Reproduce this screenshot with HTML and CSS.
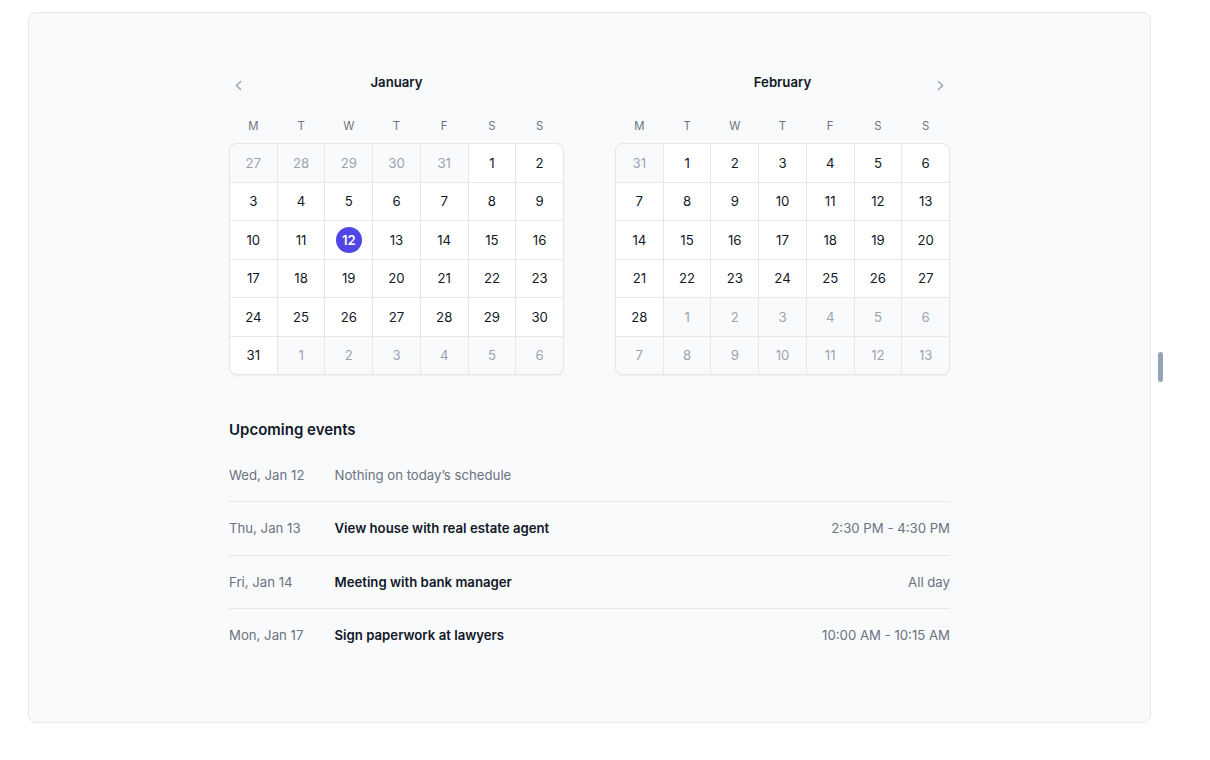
FILE: index.html
```html
<!DOCTYPE html>
<html lang="en">
<head>
<meta charset="utf-8">
<title>Calendar</title>
<link rel="stylesheet" href="styles.css">
</head>
<body>
<div class="stage">
  <div class="panel">
    <div class="content">
      <div class="cals">
        <section class="cal">
          <div class="cal-head">
            <button class="nav" type="button" aria-label="Previous month">
              <svg viewBox="0 0 20 20" fill="currentColor"><path fill-rule="evenodd" d="M12.79 5.23a.75.75 0 01-.02 1.06L8.832 10l3.938 3.71a.75.75 0 11-1.04 1.08l-4.5-4.25a.75.75 0 010-1.08l4.5-4.25a.75.75 0 011.06.02z" clip-rule="evenodd"/></svg>
            </button>
            <h2 class="month">January</h2>
            <span class="nav-spacer"></span>
          </div>
          <div class="weekdays"><span>M</span><span>T</span><span>W</span><span>T</span><span>F</span><span>S</span><span>S</span></div>
          <div class="days">
            <button class="day out"><span>27</span></button>
            <button class="day out"><span>28</span></button>
            <button class="day out"><span>29</span></button>
            <button class="day out"><span>30</span></button>
            <button class="day out"><span>31</span></button>
            <button class="day"><span>1</span></button>
            <button class="day"><span>2</span></button>
            <button class="day"><span>3</span></button>
            <button class="day"><span>4</span></button>
            <button class="day"><span>5</span></button>
            <button class="day"><span>6</span></button>
            <button class="day"><span>7</span></button>
            <button class="day"><span>8</span></button>
            <button class="day"><span>9</span></button>
            <button class="day"><span>10</span></button>
            <button class="day"><span>11</span></button>
            <button class="day selected"><span>12</span></button>
            <button class="day"><span>13</span></button>
            <button class="day"><span>14</span></button>
            <button class="day"><span>15</span></button>
            <button class="day"><span>16</span></button>
            <button class="day"><span>17</span></button>
            <button class="day"><span>18</span></button>
            <button class="day"><span>19</span></button>
            <button class="day"><span>20</span></button>
            <button class="day"><span>21</span></button>
            <button class="day"><span>22</span></button>
            <button class="day"><span>23</span></button>
            <button class="day"><span>24</span></button>
            <button class="day"><span>25</span></button>
            <button class="day"><span>26</span></button>
            <button class="day"><span>27</span></button>
            <button class="day"><span>28</span></button>
            <button class="day"><span>29</span></button>
            <button class="day"><span>30</span></button>
            <button class="day"><span>31</span></button>
            <button class="day out"><span>1</span></button>
            <button class="day out"><span>2</span></button>
            <button class="day out"><span>3</span></button>
            <button class="day out"><span>4</span></button>
            <button class="day out"><span>5</span></button>
            <button class="day out"><span>6</span></button>
          </div>
        </section>
        <section class="cal">
          <div class="cal-head">
            <span class="nav-spacer"></span>
            <h2 class="month">February</h2>
            <button class="nav" type="button" aria-label="Next month">
              <svg viewBox="0 0 20 20" fill="currentColor"><path fill-rule="evenodd" d="M7.21 14.77a.75.75 0 01.02-1.06L11.168 10 7.23 6.290a.75.75 0 111.04-1.08l4.5 4.25a.75.75 0 010 1.08l-4.5 4.25a.75.75 0 01-1.06-.02z" clip-rule="evenodd"/></svg>
            </button>
          </div>
          <div class="weekdays"><span>M</span><span>T</span><span>W</span><span>T</span><span>F</span><span>S</span><span>S</span></div>
          <div class="days">
            <button class="day out"><span>31</span></button>
            <button class="day"><span>1</span></button>
            <button class="day"><span>2</span></button>
            <button class="day"><span>3</span></button>
            <button class="day"><span>4</span></button>
            <button class="day"><span>5</span></button>
            <button class="day"><span>6</span></button>
            <button class="day"><span>7</span></button>
            <button class="day"><span>8</span></button>
            <button class="day"><span>9</span></button>
            <button class="day"><span>10</span></button>
            <button class="day"><span>11</span></button>
            <button class="day"><span>12</span></button>
            <button class="day"><span>13</span></button>
            <button class="day"><span>14</span></button>
            <button class="day"><span>15</span></button>
            <button class="day"><span>16</span></button>
            <button class="day"><span>17</span></button>
            <button class="day"><span>18</span></button>
            <button class="day"><span>19</span></button>
            <button class="day"><span>20</span></button>
            <button class="day"><span>21</span></button>
            <button class="day"><span>22</span></button>
            <button class="day"><span>23</span></button>
            <button class="day"><span>24</span></button>
            <button class="day"><span>25</span></button>
            <button class="day"><span>26</span></button>
            <button class="day"><span>27</span></button>
            <button class="day"><span>28</span></button>
            <button class="day out"><span>1</span></button>
            <button class="day out"><span>2</span></button>
            <button class="day out"><span>3</span></button>
            <button class="day out"><span>4</span></button>
            <button class="day out"><span>5</span></button>
            <button class="day out"><span>6</span></button>
            <button class="day out"><span>7</span></button>
            <button class="day out"><span>8</span></button>
            <button class="day out"><span>9</span></button>
            <button class="day out"><span>10</span></button>
            <button class="day out"><span>11</span></button>
            <button class="day out"><span>12</span></button>
            <button class="day out"><span>13</span></button>
          </div>
        </section>
      </div>
      <section class="events">
        <h2 class="events-title">Upcoming events</h2>
        <ol class="event-list">
          <li class="event">
            <time class="event-date">Wed, Jan 12</time>
            <p class="event-empty">Nothing on today’s schedule</p>
          </li>
          <li class="event">
            <time class="event-date">Thu, Jan 13</time>
            <p class="event-name">View house with real estate agent</p>
            <p class="event-time">2:30 PM - 4:30 PM</p>
          </li>
          <li class="event">
            <time class="event-date">Fri, Jan 14</time>
            <p class="event-name">Meeting with bank manager</p>
            <p class="event-time">All day</p>
          </li>
          <li class="event">
            <time class="event-date">Mon, Jan 17</time>
            <p class="event-name">Sign paperwork at lawyers</p>
            <p class="event-time">10:00 AM - 10:15 AM</p>
          </li>
        </ol>
      </section>
    </div>
  </div>
  <div class="handle"></div>
</div>
</body>
</html>
```
FILE: styles.css
```css
* { box-sizing: border-box; }

html, body {
  margin: 0;
  padding: 0;
  background: #ffffff;
  font-family: Inter, "Noto Sans", "Liberation Sans", sans-serif;
  color: #111827;
}

.stage {
  display: flex;
  align-items: center;
  gap: 7px;
  padding: 12px 0 0 28px;
}

.panel {
  width: 1123px;
  flex: none;
  background: #f9fafb;
  border: 1px solid #e5e7eb;
  border-radius: 8px;
  padding: 59px 0 60px;
}

.handle {
  width: 5px;
  height: 30px;
  border-radius: 3px;
  background: #94a3b8;
}

.content {
  width: 721px;
  margin: 0 auto;
}

.cals {
  display: grid;
  grid-template-columns: 335px 335px;
  column-gap: 51px;
}

.cal-head {
  display: grid;
  grid-template-columns: 19px 1fr 19px;
  align-items: center;
  height: 20px;
}

.month {
  margin: 0;
  padding-bottom: 4px;
  text-align: center;
  font-size: 13.2px;
  line-height: 20px;
  font-weight: 600;
  color: #111827;
}

.nav {
  display: flex;
  align-items: center;
  justify-content: center;
  width: 19px;
  height: 19px;
  padding: 0;
  margin-top: 2px;
  border: 0;
  background: none;
  color: #9ca3af;
  cursor: pointer;
}

.nav svg {
  width: 19px;
  height: 19px;
  display: block;
}

.weekdays {
  display: grid;
  grid-template-columns: repeat(7, 1fr);
  margin-top: 23px;
  padding: 0 1px;
  column-gap: 1px;
  text-align: center;
  font-size: 11.3px;
  line-height: 22px;
  color: #6b7280;
}

.days {
  display: grid;
  grid-template-columns: repeat(7, 1fr);
  grid-auto-rows: 37.5px;
  gap: 1px;
  margin-top: 6px;
  background: #e5e7eb;
  border: 1px solid #e5e7eb;
  border-radius: 8px;
  overflow: hidden;
  box-shadow: 0 1px 2px rgba(0, 0, 0, 0.06);
}

.day {
  display: flex;
  align-items: center;
  justify-content: center;
  padding: 0;
  border: 0;
  background: #ffffff;
  color: #111827;
  font-family: inherit;
  font-size: 13.2px;
  cursor: pointer;
}

.day span {
  display: flex;
  align-items: center;
  justify-content: center;
  width: 26px;
  height: 26px;
  border-radius: 50%;
}

.day.out {
  background: #f9fafb;
  color: #9ca3af;
}

.day.selected span {
  background: #4f46e5;
  color: #ffffff;
  font-weight: 600;
}

.events {
  margin-top: 44px;
}

.events-title {
  margin: 0;
  font-size: 15px;
  line-height: 22px;
  font-weight: 600;
  color: #111827;
}

.event-list {
  list-style: none;
  margin: 7.5px 0 0;
  padding: 0;
  font-size: 13.2px;
  line-height: 22.5px;
  color: #6b7280;
}

.event {
  display: flex;
  padding: 15px 0;
}

.event + .event {
  border-top: 1px solid #e5e7eb;
}

.event-date {
  width: 105.5px;
  flex: none;
}

.event p {
  margin: 0;
}

.event-name {
  flex: 1;
  font-weight: 600;
  color: #111827;
}

.event-empty {
  flex: 1;
}

.event-time {
  flex: none;
  text-align: right;
}
```
